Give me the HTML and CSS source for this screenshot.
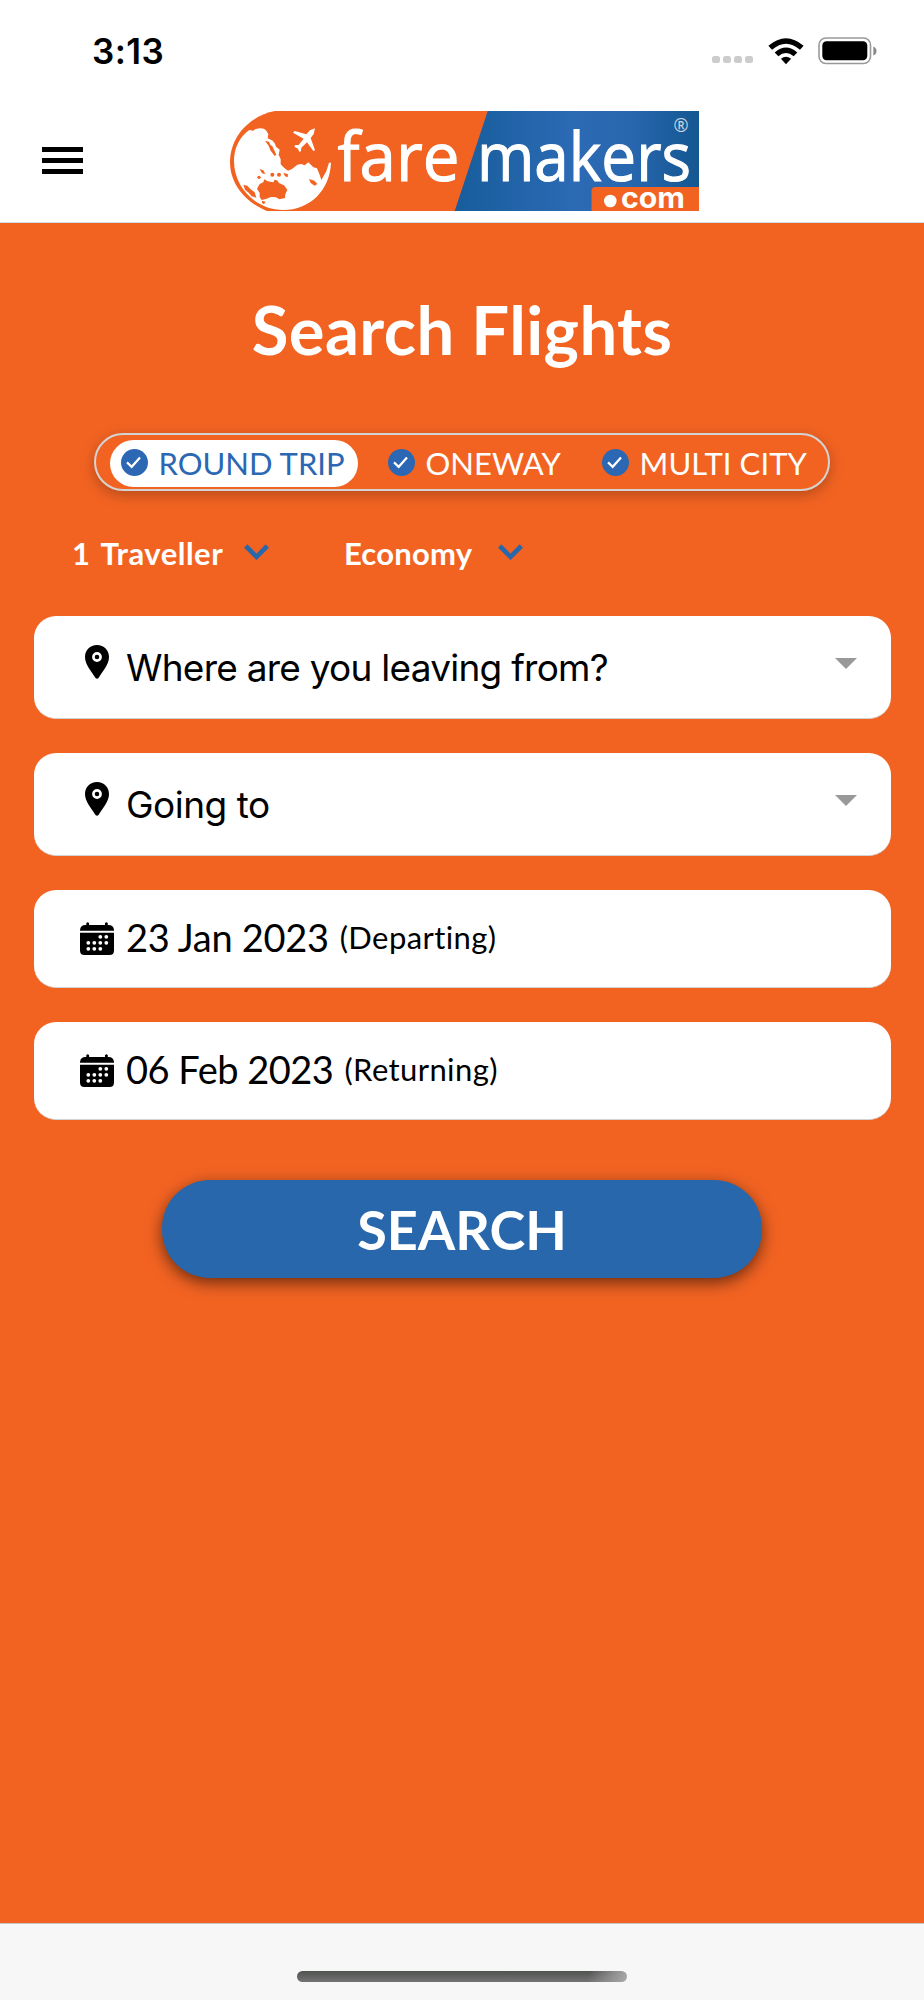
FILE: index.html
```html
<!DOCTYPE html>
<html lang="en">
<head>
  <meta charset="UTF-8" />
  <title>Fare Makers - Search Flights</title>
  <link rel="stylesheet" href="styles.css">
</head>
<body>
  <div class="status-bar">
    <div class="time">3:13</div>
    <div class="status-icons">
      <div class="signal"><i></i><i></i><i></i><i></i></div>
      <svg class="wifi" viewBox="0 0 36 27">
        <path d="M0.4 7.8 Q18 -7.2 35.6 7.8 L32 11.7 Q18 -0.4 4 11.7 Z" />
        <path d="M6.7 14.4 Q18 4.5 29.3 14.4 L25.7 18.2 Q18 11.7 10.3 18.2 Z" />
        <path d="M12.9 20.8 Q18 16.8 23.1 20.8 L18 26.2 Z" />
      </svg>
      <svg class="battery" viewBox="0 0 59 28">
        <rect x="1" y="1" width="51.5" height="25.5" rx="7" fill="none" stroke="#999" stroke-width="1.6" />
        <rect x="4.3" y="4.3" width="45" height="19" rx="4.2" />
        <path d="M55.4 9.5 Q58.5 11 58.5 14 Q58.5 17 55.4 18.5 Z" fill="#888" />
      </svg>
    </div>
  </div>

  <header class="header">
    <button class="menu" aria-label="Menu"><i></i><i></i><i></i></button>

    <svg class="logo" viewBox="0 0 469 100">
      <defs>
        <linearGradient id="blue">
          <stop offset="0" stop-color="#175d9b" />
          <stop offset="0.5" stop-color="#2c6ab5" />
          <stop offset="0.72" stop-color="#2866ae" />
          <stop offset="1" stop-color="#145791" />
        </linearGradient>
      </defs>
      <path d="M45 0 H300 V100 H37 C15 91 0 73 0 51 C0 26 19 5 45 0 Z" fill="#f26322" />
      <path d="M257.7 0 H469 V100 H224.7 Z" fill="url(#blue)" />
      <path d="M361.5 100 V80 Q361.5 76 365.5 76 H469 V100 Z" fill="#f26322" />
      <!-- globe and plane -->
      <g transform="scale(0.33333) translate(-30 -33)">
        <path fill="#fff" d="M88 90 L100 92 C108 83 132 81 139 92 L145 103 L143 115 L158 122 L165 131 L168 140 L179 149 L176 164 L182 178 L182 193 L192 203 L204 212 L216 207 L232 194 L244 192 L254 196 L265 187 L280 202 L291 205 L299 224 L304 240 L319 214 L327 188 L333 188 C330 270 270 330 190 330 C108 330 42 262 42 183 C42 145 58 111 88 90 Z" />
        <g fill="#f26322">
          <path d="M135 123 L147 125 L151 134 L157 139 L169 164 L164 168 L151 151 L146 137 Z" />
          <path d="M111 266 L119 252 L130 247 L133 238 L143 244 L160 247 L164 239 L171 241 L178 250 L192 256 L202 269 L196 283 L195 294 L178 298 L168 292 L153 291 L138 297 L125 300 L119 291 L119 279 Z" />
          <path d="M70 254 L82 257 L91 267 L104 277 L109 293 L95 289 L86 278 L75 269 Z" />
          <path d="M267 237 L283 242 L292 252 L284 257 L272 249 Z" />
          <path d="M119 207 L130 211 L136 222 L126 220 Z" />
          <circle cx="117" cy="232" r="5" />
          <circle cx="157" cy="224" r="6" />
          <circle cx="177" cy="224" r="6" />
          <path d="M190 218 L204 223 L203 232 L195 229 Z" />
          <path d="M126 302 L137 305 L132 313 L126 309 Z" />
        </g>
        <path fill="#fff" d="M285 85 L281 102 L272 114 L285 151 L280 153 L261 127 L244 143 L243 154 L238 156 L234 146 L223 140 L226 135 L236 135 L251 116 L219 98 L224 93 L259 103 L270 91 Z" />
      </g>
      <g fill="#fff">
        <text class="logo-text" x="107.5" y="69.5" textLength="122" lengthAdjust="spacingAndGlyphs">fare</text>
        <text class="logo-text" x="247" y="69.5" textLength="214" lengthAdjust="spacingAndGlyphs">makers</text>
        <circle cx="380.3" cy="90" r="6.3" />
        <text class="logo-com" x="391" y="97" textLength="64" lengthAdjust="spacingAndGlyphs">com</text>
        <text class="logo-reg" x="443.5" y="21" textLength="15" lengthAdjust="spacingAndGlyphs">®</text>
      </g>
    </svg>
  </header>

  <main class="search">
    <h1>Search Flights</h1>

    <div class="trip-types">
      <div class="trip active">
        <svg class="check" viewBox="0 0 27 27"><circle cx="13.5" cy="13.5" r="13.5" /><path d="M6 13.4 L10.7 17.8 L19 8.4" /></svg>
        <span>ROUND TRIP</span>
      </div>
      <div class="trip oneway">
        <svg class="check" viewBox="0 0 27 27"><circle cx="13.5" cy="13.5" r="13.5" /><path d="M6 13.4 L10.7 17.8 L19 8.4" /></svg>
        <span>ONEWAY</span>
      </div>
      <div class="trip multi">
        <svg class="check" viewBox="0 0 27 27"><circle cx="13.5" cy="13.5" r="13.5" /><path d="M6 13.4 L10.7 17.8 L19 8.4" /></svg>
        <span>MULTI CITY</span>
      </div>
    </div>

    <div class="options">
      <div class="option travellers">
        <span>1 Traveller</span>
        <svg class="chevron" viewBox="0 0 25 16"><path d="M1.7 2 L12.5 12.8 L23.3 2" /></svg>
      </div>
      <div class="option">
        <span>Economy</span>
        <svg class="chevron" viewBox="0 0 25 16"><path d="M1.7 2 L12.5 12.8 L23.3 2" /></svg>
      </div>
    </div>

    <div class="fields">
      <div class="field place">
        <svg class="pin" viewBox="0 0 24 34"><path d="M12 0 C5 0 0 5 0 12 C0 20 7 27 10.5 33 Q12 34.5 13.5 33 C17 27 24 20 24 12 C24 5 19 0 12 0 Z" /><circle cx="12" cy="12" r="3.6" /></svg>
        <span class="from">Where are you leaving from?</span>
        <div class="caret"></div>
      </div>
      <div class="field place">
        <svg class="pin" viewBox="0 0 24 34"><path d="M12 0 C5 0 0 5 0 12 C0 20 7 27 10.5 33 Q12 34.5 13.5 33 C17 27 24 20 24 12 C24 5 19 0 12 0 Z" /><circle cx="12" cy="12" r="3.6" /></svg>
        <span>Going to</span>
        <div class="caret"></div>
      </div>
      <div class="field date">
        <svg class="calendar" viewBox="0 0 34 34">
          <path d="M0 8.7 V8 Q0.5 3 5.5 3 H6.3 V1.2 Q7.7 -0.8 9.1 1.2 V3 H25 V1.2 Q26.4 -0.8 27.8 1.2 V3 H28.5 Q33.5 3 34 8 V8.7 Z M0 10.7 H34 V28.5 Q34 33 29.5 33 H4.5 Q0 33 0 28.5 Z" />
          <path class="dots" d="M20.3 14.8h.01M26.3 14.8h.01M8.3 20.8h.01M14.3 20.8h.01M20.3 20.8h.01M26.3 20.8h.01M8.3 26.8h.01M14.3 26.8h.01M20.3 26.8h.01" />
        </svg>
        <span>23 Jan 2023</span>
        <small>(Departing)</small>
      </div>
      <div class="field date returning">
        <svg class="calendar" viewBox="0 0 34 34">
          <path d="M0 8.7 V8 Q0.5 3 5.5 3 H6.3 V1.2 Q7.7 -0.8 9.1 1.2 V3 H25 V1.2 Q26.4 -0.8 27.8 1.2 V3 H28.5 Q33.5 3 34 8 V8.7 Z M0 10.7 H34 V28.5 Q34 33 29.5 33 H4.5 Q0 33 0 28.5 Z" />
          <path class="dots" d="M20.3 14.8h.01M26.3 14.8h.01M8.3 20.8h.01M14.3 20.8h.01M20.3 20.8h.01M26.3 20.8h.01M8.3 26.8h.01M14.3 26.8h.01M20.3 26.8h.01" />
        </svg>
        <span>06 Feb 2023</span>
        <small>(Returning)</small>
      </div>
    </div>

    <button class="search-btn">SEARCH</button>
  </main>

  <footer class="home-bar">
    <div class="indicator"></div>
  </footer>
</body>
</html>
```

FILE: styles.css
```css
:root {
  --orange: #f26322;
  --blue: #2b67b2;
  --button: #2867ab;
  --border: #d3d3d3;
}

* {
  box-sizing: border-box;
}

body {
  margin: 0;
  height: 2000px;
  display: flex;
  flex-direction: column;
  background: #fff;
  font-family: Lato, sans-serif;
  font-variant-ligatures: none;
  overflow: hidden;
}

svg {
  display: block;
  flex: none;
}

span, small {
  white-space: nowrap;
}

button {
  border: none;
  padding: 0;
  font-family: inherit;
}

/* status bar */
.status-bar {
  height: 102px;
  padding: 0 47px 0 92px;
  display: flex;
  justify-content: space-between;
  align-items: center;
}

.time {
  font: 600 35px/40px Inter, sans-serif;
  letter-spacing: 0.4px;
}

.status-icons {
  display: flex;
  align-items: center;
}

.signal {
  display: flex;
  gap: 3.3px;
  margin: 17px 15px 0 0;
}

.signal i {
  width: 7.8px;
  height: 7.5px;
  border-radius: 2.5px;
  background: #ccc;
}

.wifi {
  width: 36px;
  height: 27px;
  margin-right: 14px;
}

.battery {
  width: 59px;
  height: 28px;
}

/* header */
.header {
  height: 121px;
  padding: 9px 0 0 42px;
  display: flex;
  align-items: flex-start;
  border-bottom: 1px solid #cfe0ec;
}

.menu {
  width: 41px;
  margin: 36px 147px 0 0;
  display: flex;
  flex-direction: column;
  gap: 6.6px;
  background: none;
}

.menu i {
  height: 4.6px;
  background: #000;
}

.logo {
  width: 469px;
  height: 100px;
}

.logo-text {
  font: 400 68px "Open Sans", sans-serif;
  stroke: #fff;
  stroke-width: 1.1;
}

.logo-com {
  font: 700 29px Inter, sans-serif;
}

.logo-reg {
  font: 400 19px "Open Sans", sans-serif;
  opacity: 0.75;
}

/* search form */
.search {
  flex: 1;
  padding: 0 33px;
  background: var(--orange);
}

h1 {
  margin: 66px 0 0;
  height: 80px;
  color: #fff;
  font-size: 67px;
  line-height: 80px;
  letter-spacing: 0.4px;
  text-align: center;
}

.trip-types {
  width: 736px;
  height: 58px;
  margin: 64px 0 0 61px;
  padding: 5px 0 5px 13.5px;
  display: flex;
  border: 2px solid var(--border);
  border-radius: 29px;
  box-shadow: 0 4px 14px rgba(0, 0, 0, 0.25);
}

.trip {
  flex: none;
  height: 47px;
  padding: 0 11px;
  display: flex;
  align-items: center;
  gap: 11px;
  border-radius: 26px;
  color: #fff;
  font-size: 31px;
  line-height: 47px;
}

.trip.active {
  width: 248.5px;
  background: #fff;
  color: var(--blue);
}

.oneway {
  width: 214px;
  padding-left: 29.5px;
}

.multi {
  padding-left: 29.5px;
  letter-spacing: 0.1px;
}

.check {
  width: 27px;
  height: 27px;
  margin-top: -3px;
}

.check circle {
  fill: var(--blue);
}

.check path {
  fill: none;
  stroke: #fff;
  stroke-width: 2.2;
}

.options {
  height: 40px;
  margin-top: 42px;
  padding-left: 40px;
  display: flex;
}

.option {
  display: flex;
  align-items: center;
  color: #fff;
  font-size: 31px;
  font-weight: 700;
  letter-spacing: 0.2px;
  gap: 26px;
}

.travellers {
  width: 271px;
  margin-left: -1px;
  margin-right: 1px;
  gap: 21px;
  letter-spacing: 0.5px;
  word-spacing: 3px;
}

.chevron {
  width: 25px;
  height: 16px;
  margin-top: -2px;
}

.chevron path {
  fill: none;
  stroke: var(--button);
  stroke-width: 4.6;
}

.fields {
  margin-top: 43px;
  display: flex;
  flex-direction: column;
  gap: 34px;
}

.field {
  margin: 0 0.5px;
  display: flex;
  align-items: center;
  border-radius: 22px;
  border-bottom: 1px solid var(--border);
  background: #fff;
}

.place {
  height: 103px;
  padding: 0 34px 0 51.5px;
  font: 400 37px/50px Inter, sans-serif;
  letter-spacing: -0.5px;
}

.place span {
  margin-top: 2px;
}

.place .from {
  letter-spacing: -0.75px;
}

.pin {
  width: 24px;
  height: 34px;
  margin: -11px 17px 0 0;
}

.pin circle {
  stroke: #fff;
  stroke-width: 2.6;
}

.caret {
  margin: -7px 0 0 auto;
  border: 11px solid transparent;
  border-top-color: #999;
  border-bottom: none;
}

.date {
  height: 98px;
  padding-left: 46.5px;
  font-size: 38px;
}

.date span {
  margin-top: -3px;
  letter-spacing: -0.3px;
}

.returning span {
  letter-spacing: -0.5px;
}

.calendar {
  width: 34px;
  height: 34px;
  margin-right: 12px;
}

.dots {
  stroke: #fff;
  stroke-width: 3.8;
  stroke-linecap: round;
}

.date small {
  margin: -3px 0 0 11px;
  font-size: 31px;
  letter-spacing: 0.4px;
}

.search-btn {
  display: block;
  width: 600px;
  height: 98px;
  margin: 60px auto 0;
  border-radius: 48px;
  background: var(--button);
  box-shadow: 0 5px 16px rgba(0, 0, 0, 0.55);
  color: #fff;
  font-size: 54px;
  font-weight: 700;
}

/* bottom */
.home-bar {
  height: 77px;
  padding-top: 47px;
  background: #f7f7f7;
  border-top: 1px solid #c4c4c4;
}

.indicator {
  width: 330px;
  height: 11px;
  margin: 0 auto;
  border-radius: 6px;
  background: linear-gradient(100deg, transparent 88%, #aaa), linear-gradient(#505350, #737373);
}
```
